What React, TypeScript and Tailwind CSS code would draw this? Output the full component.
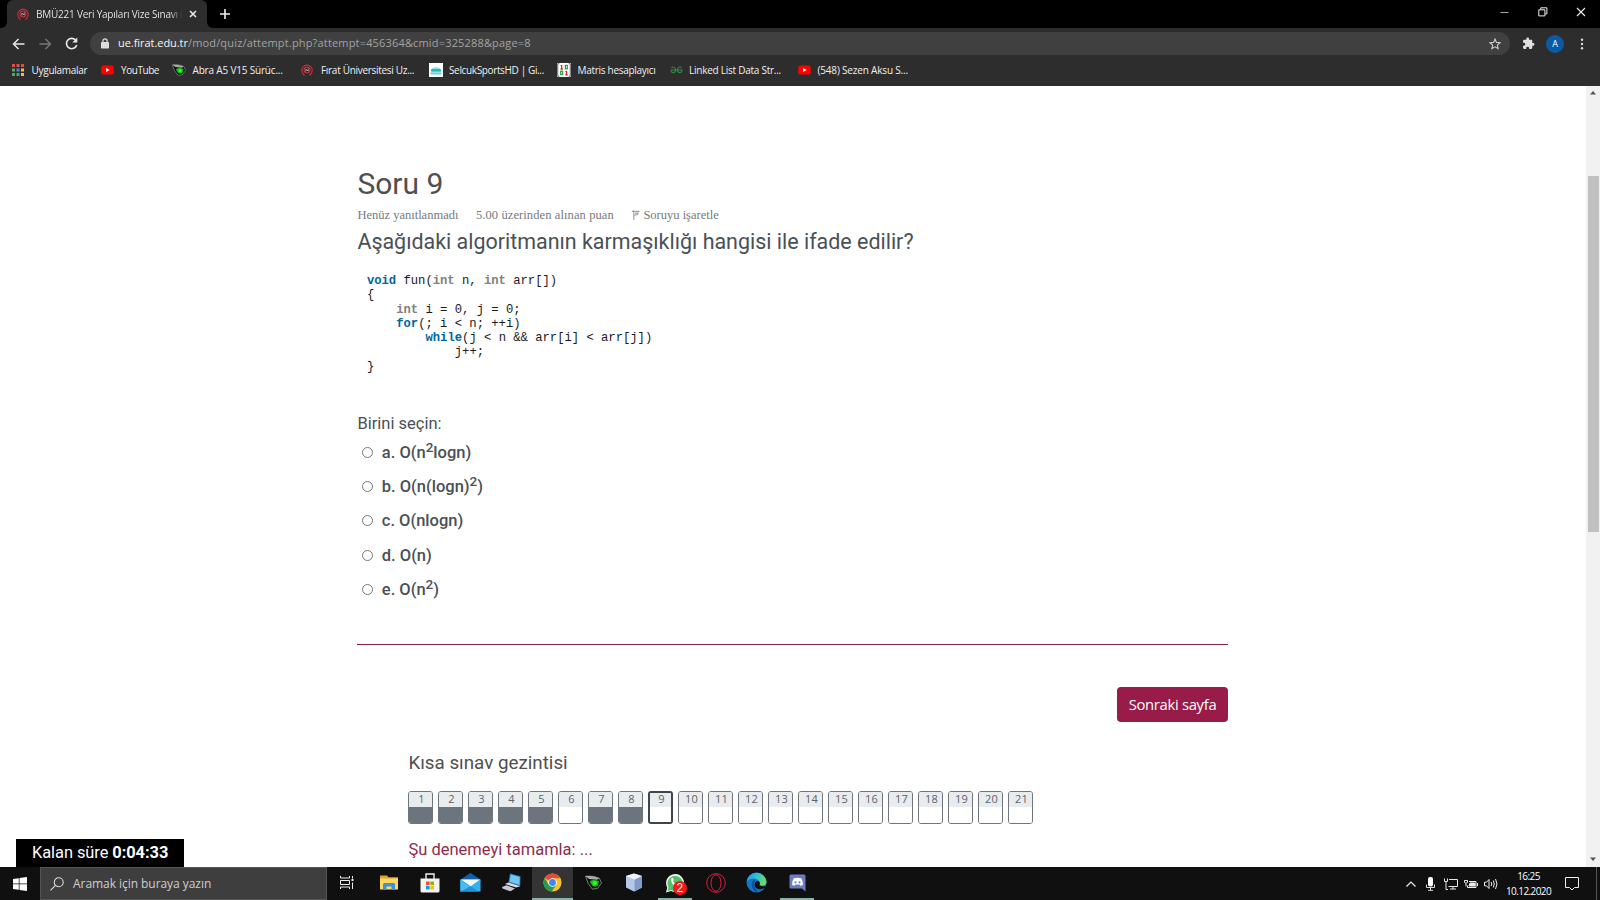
import type { ReactNode } from 'react';

const UI = "font-['Open_Sans','Noto_Sans',sans-serif]";

function UniversityIcon() {
  return (
    <svg width="12" height="12" viewBox="0 0 12 12" fill="none">
      <path d="M3 10.600A5.200 5.200 0 1 1 9 10.600" fill="#4a171b" stroke="#b3323b" strokeWidth="1.300" />
      <circle cx="6" cy="6" r="3.100" fill="#262022" stroke="#c9545b" strokeWidth=".9" />
      <path d="M4.600 5l2.800 2.200M4.900 7.600V5.200M7.200 4.400v2.600" stroke="#eab0b2" strokeWidth=".8" />
      <path d="M1.800 11h2.400M7.800 11h2.400" stroke="#b3323b" strokeWidth="1.200" />
    </svg>
  );
}

function YouTubeIcon() {
  return (
    <svg width="13" height="10" viewBox="0 0 13 10">
      <rect x=".3" y=".4" width="12.400" height="9.200" rx="2.200" fill="#f00" />
      <path d="M5.100 3v4l3.500-2z" fill="#fff" />
    </svg>
  );
}

function EyeIcon({ size }: { size: number }) {
  return (
    <svg width={size} height={size} viewBox="0 0 16 16">
      <path d="M.5 2L8 2.200l5.500 1.800 2 4.500-3.700 5-4.800.8L3 9z" fill="#0b120b" stroke="#7d857f" strokeWidth=".9" />
      <path d="M.5 2c4-.2 9 0 13 2.200L11 5.400 4 4.600z" fill="#a6aea8" />
      <path d="M4.500 7c2-1.800 5.800-1.700 8.800-.2l-1.200 4.300c-3 1.800-6 .6-7.600-4.100z" fill="#0fb80f" />
      <circle cx="9.200" cy="8.700" r="2" fill="#3df52e" />
    </svg>
  );
}

function AppsIcon() {
  const colors = ['#dd5144', '#dd5144', '#dd5144', '#4fa866', '#4a86e8', '#f0c04c', '#4fa866', '#4fa866', '#f0c04c'];
  return (
    <svg width="12" height="12" viewBox="0 0 12 12">
      {colors.map((c, i) => (
        <rect key={i} x={(i % 3) * 4.5} y={Math.floor(i / 3) * 4.5} width="3" height="3" fill={c} />
      ))}
    </svg>
  );
}

function SportsIcon() {
  return (
    <svg width="14" height="14" viewBox="0 0 14 14">
      <rect width="14" height="14" fill="#fff" />
      <path d="M3 5.400q4-2.400 8 0v1H3z" fill="#8fdde2" />
      <rect x="2" y="6" width="10" height="2.800" rx=".8" fill="#27b9c4" />
      <rect x="1.500" y="9.300" width="11" height="2.200" fill="#6fd3d9" />
    </svg>
  );
}

function MatrixIcon() {
  return (
    <svg width="14" height="14" viewBox="0 0 14 14" fill="none">
      <rect width="14" height="14" fill="#fff" />
      <path d="M2.300 .7H.7v12.600h1.600M11.700 .7h1.600v12.600h-1.600" stroke="#555" strokeWidth=".9" />
      <path d="M4.700 2v4M3.500 6.100h2.400M3.700 2.900l1-.8" stroke="#d22" strokeWidth="1.200" />
      <rect x="8.400" y="2.400" width="1.900" height="3.400" stroke="#2f9a42" strokeWidth="1.200" />
      <rect x="3.700" y="8.200" width="1.900" height="3.400" stroke="#2f9a42" strokeWidth="1.200" />
      <path d="M9.500 7.900v3.800M8.300 11.800h2.400M8.500 8.700l1-.8" stroke="#d22" strokeWidth="1.200" />
    </svg>
  );
}

function GeeksIcon() {
  return (
    <svg width="13" height="8" viewBox="0 0 13 8" fill="none" stroke="#2f8d46" strokeWidth="1.100">
      <path d="M.4 4h12.200" />
      <path d="M1.400 1.500c2-1.200 4.200 0 4.200 2.500 0 3.200-4 3.600-4.800.6M11.600 1.500c-2-1.200-4.200 0-4.200 2.500 0 3.200 4 3.600 4.800.6" />
    </svg>
  );
}

function Bookmark({ icon, label, cell, text }: { icon: ReactNode; label: string; cell: string; text: string }) {
  return (
    <div className={`flex h-full shrink-0 items-center ${cell}`}>
      <span className="flex w-[14px] shrink-0 items-center">{icon}</span>
      <span className={`whitespace-nowrap text-[10px] text-[#f0f0f0] ${text}`}>{label}</span>
    </div>
  );
}

function Browser() {
  return (
    <header className={`h-[86px] shrink-0 bg-[#2d2d2d] ${UI}`}>
      <div className="flex h-[28px] items-stretch bg-black">
        <div className="flex w-[7px] items-end bg-[#2d2d2d]">
          <span className="h-full w-full rounded-br-[6px] bg-black" />
        </div>
        <div className="flex w-[200px] items-center rounded-t-[6px] bg-[#2d2d2d] pl-[10px]">
          <UniversityIcon />
          <span className="ml-[7px] w-[146px] whitespace-nowrap bg-gradient-to-r from-[#f0f0f0] from-92% to-[#3a3a3a] bg-clip-text text-[10px] tracking-[-0.22px] text-transparent">
            BMÜ221 Veri Yapıları Vize Sınavı (
          </span>
          <svg className="ml-[7px]" width="8" height="8" viewBox="0 0 8 8" stroke="#eee" strokeWidth="1.500">
            <path d="M1 1l6 6M7 1L1 7" />
          </svg>
        </div>
        <div className="flex w-[7px] bg-[#2d2d2d]">
          <span className="h-full w-full rounded-bl-[6px] bg-black" />
        </div>
        <svg className="ml-[6px] mt-[9px]" width="10" height="10" viewBox="0 0 10 10" stroke="#eee" strokeWidth="1.600">
          <path d="M5 0v10M0 5h10" />
        </svg>
        <div className="mr-[14px] ml-auto flex items-start gap-[28.500px] pt-[7px]">
          <svg width="9" height="10" viewBox="0 0 9 10" stroke="#aaa">
            <path d="M.5 5.500h8" />
          </svg>
          <svg width="10" height="10" viewBox="0 0 10 10" fill="none" stroke="#eee">
            <path d="M.8 2.800h6.100v6.100H.8zM2.800 2.500V.8h6.100v6.100H7.200" />
          </svg>
          <svg width="10" height="10" viewBox="0 0 10 10" stroke="#eee" strokeWidth="1.100">
            <path d="M1 1l8 8M9 1L1 9" />
          </svg>
        </div>
      </div>

      <div className="flex h-[31px] items-center pl-[12px]">
        <svg width="13" height="12" viewBox="0 0 13 12" fill="none" stroke="#e8e8e8" strokeWidth="1.500">
          <path d="M12.500 6H1.500M6.500 1l-5 5 5 5" />
        </svg>
        <svg className="ml-[14px]" width="13" height="12" viewBox="0 0 13 12" fill="none" stroke="#777" strokeWidth="1.400">
          <path d="M.5 6h11M6.500 1l5 5-5 5" />
        </svg>
        <svg className="ml-[13px]" width="13" height="13" viewBox="0 0 13 13" fill="none" stroke="#e8e8e8" strokeWidth="1.600">
          <path d="M11 3.600A5.200 5.200 0 1 0 11.700 8" />
          <path d="M12.300 .6v5H7.300z" fill="#e8e8e8" stroke="none" />
        </svg>
        <div className="ml-[12px] flex h-[23px] w-[1420px] items-center rounded-full bg-[#404040] pr-[9px] pl-[11px]">
          <svg width="8" height="11" viewBox="0 0 8 11" fill="none">
            <rect y="4" width="8" height="6.500" rx=".8" fill="#ddd" />
            <path d="M1.900 4.500V2.900a2.100 2.100 0 0 1 4.200 0v1.600" stroke="#ddd" strokeWidth="1.200" />
          </svg>
          <span className="ml-[9px] whitespace-nowrap text-[11px] tracking-[0.17px] text-[#a3a3a3]">
            <span className="tracking-[-0.05px] text-[#f5f5f5]">ue.firat.edu.tr</span>/mod/quiz/attempt.php?attempt=456364&amp;cmid=325288&amp;page=8
          </span>
          <svg className="ml-auto" width="12" height="12" viewBox="0 0 12 12" fill="none" stroke="#ccc" strokeWidth="1.100">
            <path d="M6 1l1.400 3.400 3.700.3-2.800 2.400.9 3.600L6 8.800l-3.200 1.900.9-3.600L.9 4.700l3.700-.3z" />
          </svg>
        </div>
        <svg className="ml-[12px]" width="13" height="13" viewBox="0 0 24 24" fill="#e0e0e0">
          <path d="M20.500 11H19V7c0-1.100-.9-2-2-2h-4V3.500a2.500 2.500 0 0 0-5 0V5H4c-1.100 0-2 .9-2 2v3.800h1.500a2.700 2.700 0 0 1 0 5.400H2V20c0 1.100.9 2 2 2h3.800v-1.500a2.700 2.700 0 0 1 5.400 0V22H17c1.100 0 2-.9 2-2v-4h1.500a2.500 2.500 0 0 0 0-5z" />
        </svg>
        <span className="ml-[11px] flex size-[18px] items-center justify-center rounded-full bg-[#0a5aa5] text-[9px] text-white">A</span>
        <svg className="ml-[16px]" width="4" height="12" viewBox="0 0 4 12" fill="#ddd">
          <circle cx="2" cy="1.700" r="1.200" />
          <circle cx="2" cy="6" r="1.200" />
          <circle cx="2" cy="10.300" r="1.200" />
        </svg>
      </div>

      <div className="flex h-[22px] items-center pl-[12px]">
        <Bookmark icon={<AppsIcon />} label="Uygulamalar" cell="w-[89px]" text="ml-[5.500px] tracking-[-0.28px]" />
        <Bookmark icon={<YouTubeIcon />} label="YouTube" cell="w-[71px]" text="ml-[6px] tracking-[-0.45px]" />
        <Bookmark icon={<EyeIcon size={14} />} label="Abra A5 V15 Sürüc..." cell="w-[129px]" text="ml-[6.500px] tracking-[-0.18px]" />
        <Bookmark icon={<UniversityIcon />} label="Fırat Üniversitesi Uz..." cell="w-[128px]" text="ml-[6px] tracking-[-0.3px]" />
        <Bookmark icon={<SportsIcon />} label="SelcukSportsHD | Gi..." cell="w-[128px]" text="ml-[6px] tracking-[-0.36px]" />
        <Bookmark icon={<MatrixIcon />} label="Matris hesaplayıcı" cell="w-[113px]" text="ml-[6.500px] tracking-[-0.29px]" />
        <Bookmark icon={<GeeksIcon />} label="Linked List Data Str..." cell="w-[128px]" text="ml-[5px] tracking-[-0.25px]" />
        <Bookmark icon={<YouTubeIcon />} label="(548) Sezen Aksu S..." cell="w-[128px]" text="ml-[5.500px] tracking-[-0.18px]" />
      </div>
    </header>
  );
}

const K = 'font-bold text-[#006699]';
const G = 'font-bold text-[#808080]';

function Code() {
  return (
    <div className="mt-[16px] ml-[9.500px] h-[99px] font-['Liberation_Mono',monospace] text-[12.2px] leading-[14.25px] whitespace-pre text-[#1a1a1a]">
      <div className="h-[14.25px]">
        <span className={K}>void</span> fun(<span className={G}>int</span> n, <span className={G}>int</span> arr[])
      </div>
      <div className="h-[14.25px]">{'{'}</div>
      <div className="h-[14.25px] pl-[29.300px]">
        <span className={G}>int</span> i = 0, j = 0;
      </div>
      <div className="h-[14.25px] pl-[29.300px]">
        <span className={K}>for</span>{'(; i < n; ++i)'}
      </div>
      <div className="h-[14.25px] pl-[58.600px]">
        <span className={K}>while</span>{'(j < n && arr[i] < arr[j])'}
      </div>
      <div className="h-[14.25px] pl-[87.900px]">j++;</div>
      <div className="h-[14.25px]">{'}'}</div>
    </div>
  );
}

function Sup() {
  return <sup className="-top-[6px] text-[13.500px] leading-[0]">2</sup>;
}

const options: [string, ReactNode][] = [
  ['a', <>O(n<Sup />logn)</>],
  ['b', <>O(n(logn)<Sup />)</>],
  ['c', <>O(nlogn)</>],
  ['d', <>O(n)</>],
  ['e', <>O(n<Sup />)</>],
];

const questions = Array.from({ length: 21 }, (_, i) => i + 1);
const answered = [1, 2, 3, 4, 5, 7, 8];

function NavButton({ n }: { n: number }) {
  const current = n === 9;
  return (
    <div
      className={`flex h-[33px] w-[25px] flex-col overflow-hidden rounded-[3px] ${
        current ? 'border-2 border-[#3f454b]' : 'border border-[#6f757b]'
      }`}
    >
      <span
        className={`flex justify-center bg-[#e9ecef] pl-px text-[11px] text-[#5c6268] ${UI} ${
          current ? 'h-[14px] leading-[12px]' : 'h-[15.500px] leading-[14px]'
        }`}
      >
        {n}
      </span>
      <span className={`grow ${answered.includes(n) ? 'bg-[#6c757d]' : 'bg-white'}`} />
    </div>
  );
}

function Quiz() {
  return (
    <main className="flex h-[781px] shrink-0 overflow-hidden bg-white">
      <div className="flex grow flex-col pl-[357.400px] font-[Roboto,sans-serif] text-[#495057]">
        <h3 className="mt-[80px] h-[36px] whitespace-nowrap text-[30px] leading-[36px] text-[#4f4f4f]">Soru 9</h3>
        <div className="mt-[5px] flex h-[16px] items-center whitespace-nowrap font-['Liberation_Serif',serif] text-[12.500px] leading-[16px] text-[#75797e]">
          <span className="w-[118.500px]">Henüz yanıtlanmadı</span>
          <span className="w-[155px] tracking-[0.1px]">5.00 üzerinden alınan puan</span>
          <svg width="9" height="10" viewBox="0 0 9 10" fill="none" stroke="#85898e">
            <path d="M2.800 10V1L.8 1.500M2 1.300h6.300Q6.500 2.500 6.800 4.500L3 5.200M4 3h2.500" strokeWidth=".9" />
          </svg>
          <span className="ml-[3.500px]">Soruyu işaretle</span>
        </div>
        <p className="mt-[3px] h-[32px] whitespace-nowrap text-[21.450px] leading-[32px]">
          Aşağıdaki algoritmanın karmaşıklığı hangisi ile ifade edilir?
        </p>
        <Code />
        <p className="mt-[39px] h-[24px] text-[16.500px] leading-[24px]">Birini seçin:</p>
        <div className="mt-[5px] flex flex-col">
          {options.map(([key, formula]) => (
            <label key={key} className="flex h-[34.200px] items-start pl-[4.600px] text-[16.500px] leading-[24px] font-medium">
              <span className="mt-[6px] size-[11px] shrink-0 rounded-full border border-[#767676] bg-white" />
              <span className="ml-[8.800px] whitespace-nowrap">
                {key}. {formula}
              </span>
            </label>
          ))}
        </div>
        <div className="mt-[32px] h-px w-[870.600px] bg-[#8b2346]" />
        <div className="mt-[42px] flex w-[870.600px] justify-end">
          <button className={`h-[35px] w-[111px] rounded-[4px] bg-[#981b48] pb-[1px] text-[14.800px] tracking-[-0.3px] text-white ${UI}`}>
            Sonraki sayfa
          </button>
        </div>
        <h5 className="mt-[29px] ml-[51px] h-[24px] text-[18.800px] leading-[24px] text-[#4f4f4f]">Kısa sınav gezintisi</h5>
        <div className="mt-[16px] ml-[51px] flex gap-[5px]">
          {questions.map((n) => (
            <NavButton key={n} n={n} />
          ))}
        </div>
        <a className="mt-[14px] ml-[51px] h-[24px] text-[16.500px] leading-[24px] text-[#8e2b4c]">Şu denemeyi tamamla: ...</a>
      </div>
      <div className="flex w-[14px] flex-col items-center bg-[#f1f1f1]">
        <svg className="mt-[5px]" width="6" height="4" viewBox="0 0 6 4" fill="#505050">
          <path d="M3 0l3 3.500H0z" />
        </svg>
        <div className="mt-[81px] h-[356px] w-[11px] bg-[#c1c1c1]" />
        <svg className="mt-auto mb-[6px]" width="6" height="4" viewBox="0 0 6 4" fill="#505050">
          <path d="M3 4L0 .5h6z" />
        </svg>
      </div>
    </main>
  );
}

type TaskProps = { children: ReactNode; active?: boolean; open?: boolean; width?: string };

function TaskItem({ children, active, open, width = 'w-[40.800px]' }: TaskProps) {
  return (
    <div className={`flex h-full shrink-0 flex-col items-center ${width} ${active ? 'bg-[#343434]' : ''}`}>
      <span className="flex grow items-center">{children}</span>
      <span className={`h-[2px] ${active ? 'w-full bg-[#86b5a8]' : open ? 'w-[34px] bg-[#86b5a8]' : 'w-full'}`} />
    </div>
  );
}

function Taskbar() {
  return (
    <footer className={`flex h-[33px] items-stretch bg-[#101010] ${UI}`}>
      <div className="flex w-[40px] items-center justify-center">
        <svg width="14" height="14" viewBox="0 0 14 14" fill="#fff">
          <path d="M0 2l5.800-.8v5.400H0zM6.500 1.100L14 0v6.600H6.500zM0 7.300h5.800v5.400L0 11.900zM6.500 7.300H14V14l-7.500-1.100z" />
        </svg>
      </div>
      <div className="flex w-[287px] items-center border border-[#555] bg-[#3e3e3e] pl-[9px]">
        <svg width="14" height="14" viewBox="0 0 14 14" fill="none" stroke="#ddd" strokeWidth="1.100">
          <circle cx="8.700" cy="5.200" r="4.500" />
          <path d="M5.500 8.400L.5 13.400" />
        </svg>
        <span className="ml-[9px] whitespace-nowrap text-[12px] tracking-[-0.05px] text-[#cfcfcf]">Aramak için buraya yazın</span>
      </div>
      <TaskItem width="w-[40px]">
        <svg width="14" height="13" viewBox="0 0 14 13" fill="none" stroke="#eee">
          <path d="M.5 0v2h9V0M.5 4.500h9v4h-9zM.5 13v-2h9v2M12.500 0v2.500M12.500 6.500V13" />
          <rect x="11.500" y="3" width="2" height="2" fill="#eee" stroke="none" />
        </svg>
      </TaskItem>
      <TaskItem width="w-[43px]">
        <svg width="18" height="15" viewBox="0 0 18 15">
          <path d="M0 .5h7l1.500 1.700H18V14H0z" fill="#e0a22c" />
          <path d="M0 3.500h18v11H0z" fill="#fbd766" />
          <path d="M3 15V9.500q0-1.500 1.500-1.500h9q1.500 0 1.500 1.500V15h-3.500v-3.500h-5V15z" fill="#3f91d0" />
        </svg>
      </TaskItem>
      <TaskItem width="w-[40.500px]">
        <svg width="20" height="20" viewBox="0 0 20 20" fill="none">
          <path d="M6 6.500V1h8v5.500" stroke="#f3f3f3" strokeWidth="1.400" />
          <path d="M.5 5.500h19V18q0 1.500-1.500 1.500H2Q.5 19.500.5 18z" fill="#f3f3f3" />
          <path d="M6 8.500h3.600v3.600H6z" fill="#f25022" />
          <path d="M10.400 8.500H14v3.600h-3.600z" fill="#7fba00" />
          <path d="M6 12.900h3.600v3.600H6z" fill="#00a4ef" />
          <path d="M10.400 12.900H14v3.600h-3.600z" fill="#ffb900" />
        </svg>
      </TaskItem>
      <TaskItem>
        <svg width="21" height="19" viewBox="0 0 21 19">
          <path d="M.5 6.500L10.500 0l10 6.500v3H.5z" fill="#125ea8" />
          <path d="M.5 6.500h20V18.500H.5z" fill="#35b0ee" />
          <path d="M1 6.500h19l-9.500 7z" fill="#f4f8fb" />
          <path d="M.5 6.500v12h18z" fill="#2193dd" />
          <path d="M.5 6.500l9.500 7-9.500 5z" fill="#46bff4" />
        </svg>
      </TaskItem>
      <TaskItem>
        <svg width="20" height="20" viewBox="0 0 20 20">
          <path d="M8 .5l10.500 2.700-.3 10L6.500 9.500z" fill="#2d7fc0" />
          <path d="M8.800 1.600l8.900 2.300-.3 7.800-9.800-3z" fill="#73c6f2" />
          <path d="M6.500 9.500l11.700 3.700-4 1.300L3 11z" fill="#d9dde0" />
          <path d="M0 14l4.500-1.800 8.500 3.300-4.500 2.800L.5 15.500z" fill="#c4cacf" />
        </svg>
      </TaskItem>
      <TaskItem active>
        <svg width="19" height="19" viewBox="0 0 20 20">
          <circle cx="10" cy="10" r="9.500" fill="#f6c431" />
          <path d="M10 10L1.800 5.200A9.500 9.500 0 0 1 18.200 5.500H10z" fill="#df4b3e" />
          <path d="M1.800 5.200A9.500 9.500 0 0 0 9.300 19.500L14 12.300 10 10 6 12.300z" fill="#279b55" />
          <circle cx="10" cy="10" r="4.500" fill="#fff" />
          <circle cx="10" cy="10" r="3.600" fill="#4285f4" />
        </svg>
      </TaskItem>
      <TaskItem>
        <EyeIcon size={17} />
      </TaskItem>
      <TaskItem>
        <svg width="18" height="19" viewBox="0 0 18 19">
          <path d="M9 .5l8 2.500v11.500L9 18.500 1 14.500V3z" fill="#b4c9ea" />
          <path d="M9 .5l8 2.500-7.500 3.800L1 3z" fill="#eef3fc" />
          <path d="M9.500 6.800L17 3v11.500l-7.500 4z" fill="#7f9cc8" />
        </svg>
      </TaskItem>
      <TaskItem open>
        <span className="relative flex">
          <svg width="20" height="20" viewBox="0 0 20 20">
            <path d="M1 19.500l1.300-5A9 9 0 1 1 6 18z" fill="#f4f4f4" />
            <path d="M2.600 18l1-3.700A7.600 7.600 0 1 1 6.200 16.900z" fill="#54c068" />
            <path d="M6.500 5.200q1.200-1 1.700.3l.6 1.500-.8 1.200q1.200 2.300 3.400 3l1.100-1.200 2.200 1.100q0 2.400-2.300 2.500C9 13.400 5.200 9.300 6.500 5.200z" fill="#fff" />
          </svg>
          <span className="absolute top-[8px] left-[8px] flex size-[14px] items-center justify-center rounded-full bg-[#f01818] font-['Liberation_Sans',sans-serif] text-[12px] leading-none text-white">
            2
          </span>
        </span>
      </TaskItem>
      <TaskItem>
        <svg width="20" height="20" viewBox="0 0 20 20" fill="none" stroke="#d91f45" strokeWidth="1">
          <circle cx="10" cy="10" r="9.300" />
          <ellipse cx="10" cy="10" rx="5" ry="8.200" />
        </svg>
      </TaskItem>
      <TaskItem>
        <svg width="21" height="21" viewBox="0 0 21 21">
          <defs>
            <linearGradient id="edgeTop" x1="0" y1="0" x2="1" y2=".3">
              <stop offset="0" stopColor="#1597d8" />
              <stop offset=".5" stopColor="#2fc0d8" />
              <stop offset="1" stopColor="#66d96a" />
            </linearGradient>
          </defs>
          <circle cx="10.500" cy="10.500" r="10" fill="#1377c8" />
          <path d="M.6 10A10 10 0 0 1 20.500 9.500c.2 3.800-3.300 5-6.500 4-1.400-.5-.2-1.300-.4-3C13 6.300 4 4.500.6 10z" fill="url(#edgeTop)" />
          <path d="M13.200 9.500c-2-1.400-5.200.7-4.500 4.200.8 3.500 5.500 4.500 9.800 2.300l1 .5 1.300-3c-2 1.300-4.800.9-6.600 0-1.300-.6-.2-1.500-.3-2.700z" fill="#101010" />
          <path d="M8.700 8.200c-3 2.300-2.700 8.300 2.300 11.300" stroke="#0d4f96" strokeWidth="2" fill="none" />
        </svg>
      </TaskItem>
      <TaskItem open>
        <svg width="17" height="18" viewBox="0 0 17 18">
          <path d="M2 .5h13q1.500 0 1.500 1.500v15.500l-3.500-3H2Q.5 14.500.5 13V2Q.5.500 2 .5z" fill="#6d7cc4" />
          <path d="M4.800 4.200q3.700-1 7.400 0 2 3 1.800 6.600-1.400 1-2.800 1l-.7-1.200h-4l-.7 1.200q-1.400 0-2.800-1Q2.800 7.200 4.800 4.200z" fill="#fff" />
          <circle cx="6.500" cy="8.300" r="1.100" fill="#6d7cc4" />
          <circle cx="10.500" cy="8.300" r="1.100" fill="#6d7cc4" />
        </svg>
      </TaskItem>

      <div className="mr-[3px] ml-auto flex items-center">
        <svg width="10" height="6" viewBox="0 0 10 6" fill="none" stroke="#eee" strokeWidth="1.200">
          <path d="M.5 5.500L5 1l4.500 4.500" />
        </svg>
        <svg className="ml-[10px]" width="9" height="14" viewBox="0 0 9 14" fill="none">
          <rect x="2" y="0" width="5" height="9.500" rx="2" fill="#fff" />
          <path d="M.5 7.500v3h8v-3M4.500 10.500v2.500M2 13.300h5" stroke="#ddd" />
        </svg>
        <svg className="ml-[9px]" width="14" height="12" viewBox="0 0 14 12" fill="none" stroke="#e8e8e8">
          <path d="M5 1.500h8.500v7H4.500M6 11h6M9 8.500V11M.5 .5v3h3v-3M2 3.500v8h2" />
        </svg>
        <svg className="ml-[6px]" width="14" height="10" viewBox="0 0 14 10" fill="none" stroke="#eee">
          <path d="M5 2.500h7v6H3.500V6.500M13.500 4v3M.5 1.500h3v2q-1.500 1.500-3 0zM2 4.500v3" />
          <path d="M6 4h5v3H5z" fill="#eee" />
        </svg>
        <svg className="ml-[6px]" width="14" height="12" viewBox="0 0 14 12" fill="none" stroke="#eee">
          <path d="M.5 4.200h2L5 1.500v9L2.500 7.800h-2zM7.200 4q1.200 2 0 4M9.300 2.500q2 3.500 0 7M11.500 1q3 5 0 10" />
        </svg>
        <div className="ml-[8px] flex w-[45px] flex-col items-center text-[10px] leading-[15px] whitespace-nowrap text-white">
          <span className="tracking-[-0.6px]">16:25</span>
          <span className="tracking-[-0.600px]">10.12.2020</span>
        </div>
        <svg className="ml-[14px]" width="14" height="14" viewBox="0 0 14 14" fill="none" stroke="#eee">
          <path d="M.5 .5h13v10H9.500L7 13 4.500 10.500h-4z" />
        </svg>
        <span className="ml-[17px] h-full w-px bg-[#555]" />
      </div>
    </footer>
  );
}

export default function App() {
  return (
    <div className="relative flex h-[900px] w-[1600px] flex-col overflow-hidden bg-white">
      <Browser />
      <Quiz />
      <Taskbar />
      <div className="absolute top-[839px] left-[16px] flex h-[28px] w-[168px] items-center bg-black pl-[16px] font-[Roboto,sans-serif] text-[16.400px] tracking-[-0.05px] whitespace-nowrap text-white">
        Kalan süre&nbsp;<b>0:04:33</b>
      </div>
    </div>
  );
}
